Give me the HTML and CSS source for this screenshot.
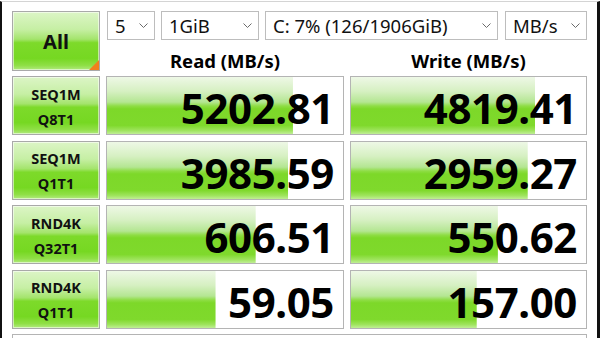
FILE: index.html
```html
<!DOCTYPE html>
<html>
<head>
<meta charset="utf-8">
<link rel="stylesheet" href="styles.css">
</head>
<body>
<div class="app">
  <div class="grid">
    <div class="btn all">All<span class="corner"></span></div>
    <div class="selects">
      <div class="sel s1"><span>5</span><svg class="chev" viewBox="0 0 9 5"><polyline points="0.5,0.5 4.5,4.5 8.5,0.5"/></svg></div>
      <div class="sel s2"><span>1GiB</span><svg class="chev" viewBox="0 0 9 5"><polyline points="0.5,0.5 4.5,4.5 8.5,0.5"/></svg></div>
      <div class="sel s3"><span>C: 7% (126/1906GiB)</span><svg class="chev" viewBox="0 0 9 5"><polyline points="0.5,0.5 4.5,4.5 8.5,0.5"/></svg></div>
      <div class="sel s4"><span>MB/s</span><svg class="chev" viewBox="0 0 9 5"><polyline points="0.5,0.5 4.5,4.5 8.5,0.5"/></svg></div>
    </div>
    <div class="head">Read (MB/s)</div>
    <div class="head">Write (MB/s)</div>

    <div class="btn label">SEQ1M<br>Q8T1</div>
    <div class="cell" style="--w:78.8%">5202.81</div>
    <div class="cell" style="--w:78.3%">4819.41</div>

    <div class="btn label">SEQ1M<br>Q1T1</div>
    <div class="cell" style="--w:76.7%">3985.59</div>
    <div class="cell" style="--w:75.2%">2959.27</div>

    <div class="btn label">RND4K<br>Q32T1</div>
    <div class="cell" style="--w:63%">606.51</div>
    <div class="cell" style="--w:62.5%">550.62</div>

    <div class="btn label">RND4K<br>Q1T1</div>
    <div class="cell" style="--w:46%">59.05</div>
    <div class="cell" style="--w:53.5%">157.00</div>

    <div class="comment"></div>
  </div>
</div>
</body>
</html>
```
FILE: styles.css
```css
* { box-sizing: border-box; }
html, body { margin: 0; padding: 0; background: #fff; }
body { font-family: "Noto Sans", "Open Sans", sans-serif; color: #000; }
.app {
  width: 600px;
  height: 338px;
  overflow: hidden;
  background: #fff;
  border-left: 2px solid #111;
  border-right: 3px solid #111;
  border-top: 1px solid #d4d4d4;
  margin-top: 1px;
}
.grid {
  display: grid;
  grid-template-columns: 88px 238px 237px;
  grid-template-rows: 29px 25px repeat(4, 59px) 30px;
  column-gap: 6px;
  row-gap: 5.5px;
  padding: 9px 0 0 10px;
}
.btn {
  border: 1px solid #a9a9a9;
  box-shadow: inset 0 0 0 1px rgba(255,255,255,0.55);
  background: linear-gradient(to bottom, #dcf5c6 0%, #c6efa4 30%, #a4e46c 47%, #7dda2a 53%, #76d822 80%, #8fdf45 92%, #b2ea80 100%);
  font-weight: 700;
  color: #111;
  display: flex;
  align-items: center;
  justify-content: center;
  text-align: center;
}
.all {
  grid-row: 1 / 3;
  font-size: 20px;
  position: relative;
  padding-top: 2px;
}
.corner {
  position: absolute;
  right: 0;
  bottom: 0;
  width: 0;
  height: 0;
  border-style: solid;
  border-width: 0 0 10px 10px;
  border-color: transparent transparent #f0801e transparent;
}
.label {
  font-size: 14.5px;
  line-height: 25px;
  padding-top: 2px;
}
.selects {
  grid-column: 2 / 4;
  display: flex;
  gap: 6px;
  padding-left: 1px;
}
.sel {
  height: 29px;
  border: 1px solid #bdbdbd;
  background: #fff;
  display: flex;
  align-items: center;
  justify-content: space-between;
  padding: 0 6px 0 7px;
  font-size: 18.5px;
  color: #111;
  white-space: nowrap;
}
.s1 { width: 48px; }
.s2 { width: 98px; }
.s3 { width: 233px; }
.s4 { width: 82px; margin-left: 1px; }
.chev { width: 9px; height: 5px; flex: none; }
.chev polyline { fill: none; stroke: #6a6a6a; stroke-width: 1; }
.head {
  font-size: 18.5px;
  font-weight: 700;
  line-height: 20px;
  display: flex;
  align-items: flex-end;
  justify-content: center;
}
.cell {
  border: 1px solid #b4b4b4;
  background-color: #fff;
  background-image: linear-gradient(to bottom, #eef8e6 0%, #d6f0c2 25%, #b4e692 44%, #8edd44 51%, #7dd829 56%, #7fd92c 85%, #9fe45e 94%, #c0ee96 100%);
  background-repeat: no-repeat;
  background-size: var(--w) 100%;
  font-size: 42px;
  font-weight: 700;
  color: #000;
  display: flex;
  align-items: center;
  justify-content: flex-end;
  padding: 4px 9px 0 0;
  letter-spacing: -0.4px;
}
.comment {
  grid-column: 1 / 4;
  border: 1px solid #b4b4b4;
  background: #fff;
}
```
